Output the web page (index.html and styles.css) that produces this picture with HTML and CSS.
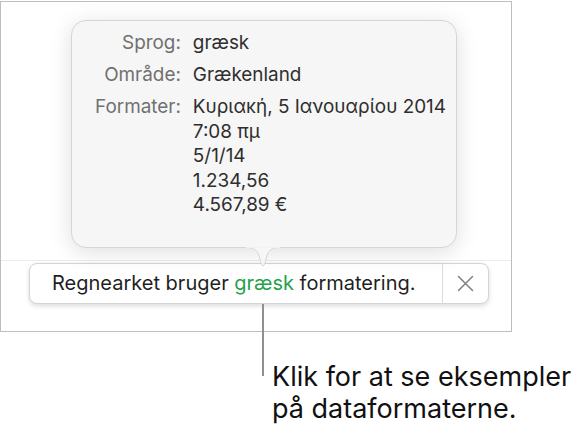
FILE: index.html
```html
<!DOCTYPE html>
<html lang="da">
<head>
<meta charset="utf-8">
<title>Formatering</title>
<link rel="stylesheet" href="styles.css">
</head>
<body>
<div class="page">
  <div class="frame">
    <div class="popover">
      <dl class="info">
        <dt>Sprog:</dt><dd>græsk</dd>
        <dt>Område:</dt><dd>Grækenland</dd>
        <dt>Formater:</dt><dd>Κυριακή, 5 Ιανουαρίου 2014<br>7:08 πμ<br>5/1/14<br>1.234,56<br>4.567,89 €</dd>
      </dl>
      <svg class="tail" width="34" height="21" viewBox="0 0 34 21">
        <path d="M0 0.5 C7 0.5 10 2.5 12.5 7 L15.6 17.8 Q17 20.4 18.4 17.8 L21.5 7 C24 2.5 27 0.5 34 0.5" fill="#f6f6f6" stroke="#d6d6d6" stroke-width="1"/>
        <rect x="0" y="0" width="34" height="0.8" fill="#f6f6f6"/>
      </svg>
    </div>
    <div class="sheet">
      <div class="banner">
        <p class="msg">Regnearket bruger <span class="green">græsk</span> formatering.</p>
        <span class="close">
          <svg width="17" height="17" viewBox="0 0 17 17"><path d="M1.5 1.5 L15.5 15.5 M15.5 1.5 L1.5 15.5" stroke="#808080" stroke-width="1.5" stroke-linecap="round"/></svg>
        </span>
      </div>
    </div>
  </div>
  <span class="leader"></span>
  <p class="caption">Klik for at se eksempler<br>på dataformaterne.</p>
</div>
</body>
</html>
```

FILE: styles.css
```css
* { box-sizing: border-box; }
html, body { margin: 0; padding: 0; background: #ffffff; }
body { font-family: "Inter", "Noto Sans", sans-serif; }
.page { position: relative; width: 587px; height: 438px; overflow: hidden; padding-top: 1px; }
.frame {
  width: 512px;
  height: 331px;
  border: 1px solid #bdbdbd;
  display: flex;
  flex-direction: column;
  padding-top: 18px;
}
.popover {
  position: relative;
  margin-left: 70px;
  width: 386px;
  height: 228px;
  background: #f6f6f6;
  border: 1px solid #d6d6d6;
  border-radius: 15px;
  box-shadow: 0 4px 22px rgba(0,0,0,0.13);
  padding: 10px 0 0 23px;
  z-index: 2;
}
.info {
  margin: 0;
  display: grid;
  grid-template-columns: auto 1fr;
  column-gap: 12px;
  row-gap: 8px;
  font-size: 18.9px;
  line-height: 24px;
}
.info dt { color: #707070; text-align: right; }
.info dd { margin: 0; color: #2e2e2e; }
.info dd:last-child { line-height: 24.6px; }
.tail {
  position: absolute;
  left: 174px;
  top: 226px;
  display: block;
}
.sheet {
  margin-top: 12px;
  border-top: 1px solid #ececec;
  padding-top: 2px;
  flex: 1;
}
.banner {
  margin-left: 28px;
  width: 460px;
  height: 41px;
  background: #ffffff;
  border: 1px solid #d4d4d4;
  border-radius: 8px;
  box-shadow: 0 2px 5px rgba(0,0,0,0.14);
  display: flex;
  align-items: stretch;
}
.msg {
  margin: 0;
  flex: 1;
  padding-left: 22px;
  font-size: 20px;
  line-height: 39px;
  color: #1f1f1f;
  white-space: nowrap;
}
.green { color: #23a24a; }
.close {
  width: 46px;
  border-left: 1px solid #dcdcdc;
  display: flex;
  align-items: center;
  justify-content: center;
}
.close svg { display: block; }
.leader {
  position: absolute;
  left: 262px;
  top: 304px;
  width: 2px;
  height: 72px;
  background: #8f8f8f;
}
.caption {
  margin: 29px 0 0 272px;
  font-size: 27px;
  line-height: 31.5px;
  color: #111111;
}
```
